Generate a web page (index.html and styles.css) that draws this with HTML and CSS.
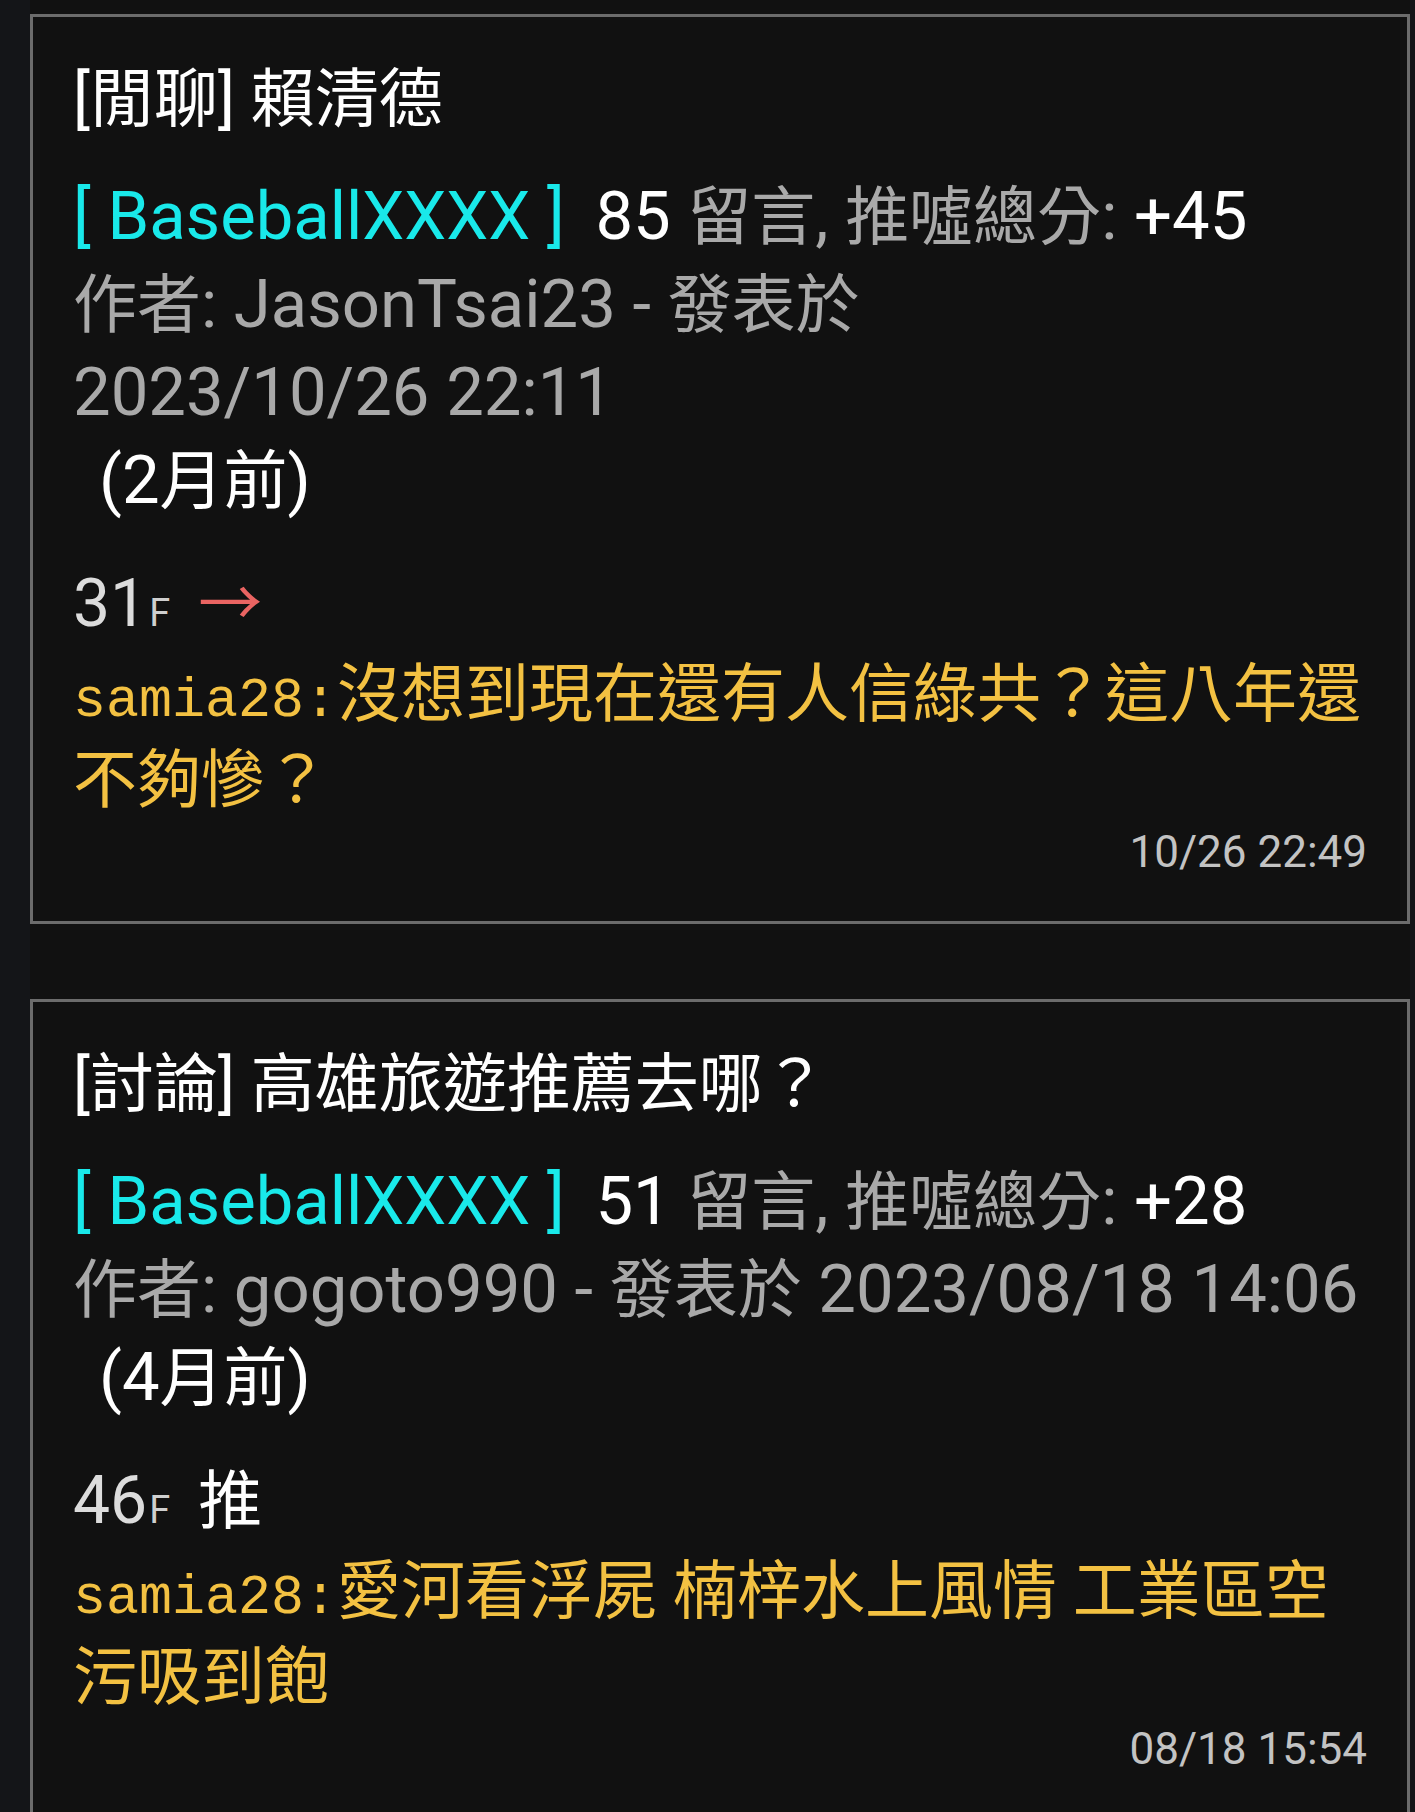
FILE: index.html
```html
<!DOCTYPE html>
<html lang="zh-Hant">
<head>
<meta charset="utf-8">
<title>PTT</title>
<link rel="stylesheet" href="styles.css">
</head>
<body>
<div class="list">
  <article class="card">
    <div class="title">[閒聊] 賴清德</div>
    <div class="meta">
      <div class="stats"><span class="board">[ BaseballXXXX ]</span> <span class="num">85</span> <span class="c">留言</span>, <span class="c">推噓總分</span>: <span class="num">+45</span></div>
      <div class="author"><span class="c">作者</span>: JasonTsai23 - <span class="c">發表於</span> <span class="date">2023/10/26 22:11</span></div>
      <div class="ago">(2<span class="c">月前</span>)</div>
    </div>
    <div class="push">
      <div class="floor"><span class="fnum">31</span><span class="fl">F</span><span class="tag arrow">→</span></div>
      <div class="comment"><span class="user">samia28:</span>沒想到現在還有人信綠共？這八年還不夠慘？</div>
      <div class="time">10/26 22:49</div>
    </div>
  </article>
  <article class="card">
    <div class="title">[討論] 高雄旅遊推薦去哪？</div>
    <div class="meta">
      <div class="stats"><span class="board">[ BaseballXXXX ]</span> <span class="num">51</span> <span class="c">留言</span>, <span class="c">推噓總分</span>: <span class="num">+28</span></div>
      <div class="author"><span class="c">作者</span>: gogoto990 - <span class="c">發表於</span> <span class="date">2023/08/18 14:06</span></div>
      <div class="ago">(4<span class="c">月前</span>)</div>
    </div>
    <div class="push">
      <div class="floor"><span class="fnum">46</span><span class="fl">F</span><span class="tag good">推</span></div>
      <div class="comment"><span class="user">samia28:</span>愛河看浮屍 楠梓水上風情 工業區空污吸到飽</div>
      <div class="time">08/18 15:54</div>
    </div>
  </article>
</div>
</body>
</html>
```

FILE: styles.css
```css
html, body {
  margin: 0;
  padding: 0;
}
body {
  background: #141518;
  font-family: "Roboto", "Noto Sans CJK TC", sans-serif;
  font-size: 64px;
  color: #ffffff;
}
.list {
  margin-left: 30px;
  margin-right: 5px;
  padding-top: 14px;
  background: #111111;
  display: flex;
  flex-direction: column;
  gap: 75px;
  min-height: 1812px;
  box-sizing: border-box;
}
.card {
  border: 3px solid #6c6c6c;
  background: #111111;
  padding: 39px 34px 39px 40px;
}
.title {
  line-height: 88px;
  color: #ffffff;
}
.meta {
  margin-top: 28px;
  line-height: 88px;
  font-size: 67px;
  color: #a9a9a9;
}
.c {
  font-size: 64px;
  line-height: 1;
}
.board {
  color: #19e9ea;
  margin-right: 14px;
}
.num {
  color: #ffffff;
}
.date {
  white-space: nowrap;
}
.ago {
  color: #ffffff;
  padding-left: 26px;
}
.push {
  margin-top: 36px;
}
.floor {
  line-height: 88px;
  color: #dcdcdc;
}
.fnum {
  font-size: 66px;
}
.fl {
  font-size: 38px;
  line-height: 1;
  color: #cfcfcf;
  margin-left: 2px;
}
.tag {
  margin-left: 28px;
  line-height: 1;
  font-family: "Noto Sans CJK TC", sans-serif;
}
.arrow {
  color: #ea6462;
}
.good {
  color: #ffffff;
}
.comment {
  margin-top: 3px;
  line-height: 86px;
  color: #f3c142;
}
.user {
  font-family: "Liberation Mono", monospace;
  font-size: 55px;
  line-height: 1;
  color: #f3c142;
}
.time {
  margin-top: -2px;
  margin-right: 6px;
  text-align: right;
  font-size: 44px;
  line-height: 60px;
  color: #c3c3c3;
}
```
